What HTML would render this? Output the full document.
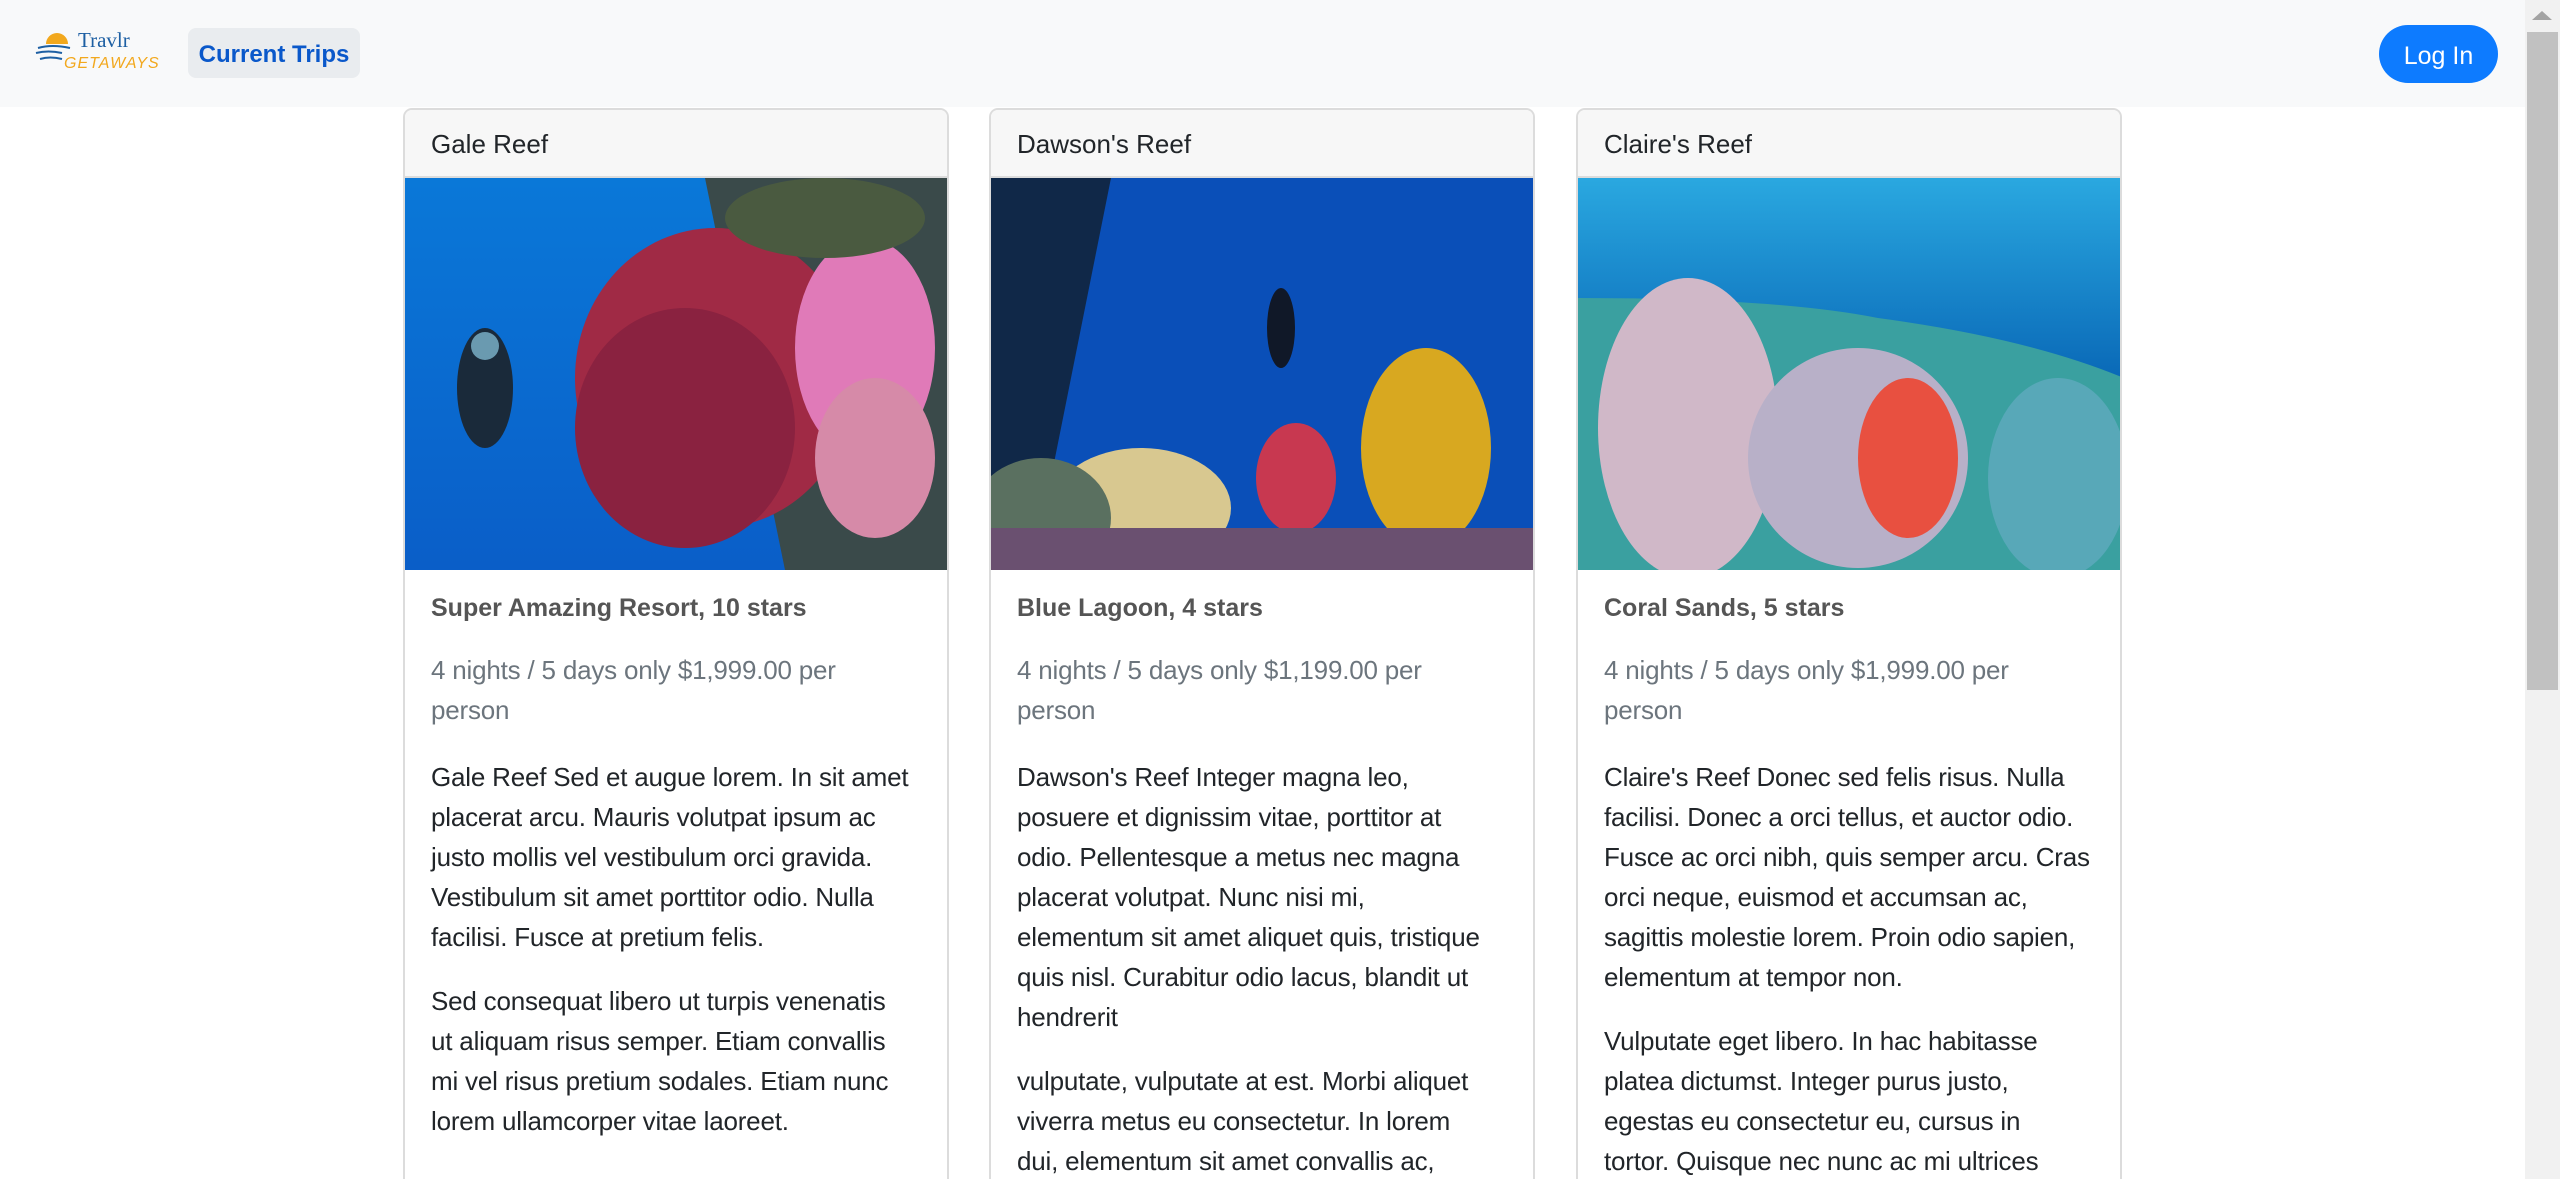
<!DOCTYPE html>
<html><head><meta charset="utf-8"><style>
*{box-sizing:border-box;margin:0;padding:0}
html,body{width:2560px;height:1179px;overflow:hidden;background:#fff;font-family:"Liberation Sans",sans-serif}
.nav{position:absolute;left:0;top:0;width:2526px;height:107px;background:#f8f9fa}
.ct{position:absolute;left:188px;top:28px;width:172px;height:50px;background:#e9ecef;border-radius:8px;color:#0a58ca;font-weight:bold;font-size:24px;line-height:54px;text-align:center}
.login{position:absolute;left:2379px;top:25px;width:119px;height:58px;background:#0d7bff;border-radius:29px;color:#fff;font-size:25px;line-height:62px;text-align:center}
.sb{position:absolute;left:2525px;top:0;width:35px;height:1179px;background:#f1f1f1}
.thumb{position:absolute;left:2527px;top:32px;width:31px;height:658px;background:#c1c1c1}
.card{position:absolute;top:108px;width:546px;height:1071px;border:2px solid #dcdcdc;border-bottom:none;border-radius:9px 9px 0 0;overflow:hidden}
.hd{height:68px;background:#f7f7f7;border-bottom:2px solid #dcdcdc;font-size:26px;color:#212529;padding-left:26px;line-height:68px}
.img{height:392px;display:block}
.bd{padding:22px 26px;white-space:nowrap}
.t{font-weight:bold;font-size:25px;color:#555;line-height:32px;margin-bottom:26px}
.s{font-size:26px;color:#6c757d;line-height:40px;margin-bottom:27px;letter-spacing:-.2px}
.p{font-size:26px;color:#212529;line-height:40px;margin-bottom:24px;letter-spacing:-.2px}
</style></head><body>
<div class="nav">
<svg style="position:absolute;left:34px;top:28px" width="125" height="46" viewBox="0 0 125 46">
<path d="M12 16 A11 11 0 0 1 34 16 Z" fill="#f2a81d"/>
<path d="M4 20 Q18 16 36 20" stroke="#1d5fa3" stroke-width="2" fill="none"/>
<path d="M2 25 Q14 22 28 25" stroke="#1d5fa3" stroke-width="2" fill="none"/>
<path d="M6 31 Q16 28 28 31" stroke="#1d5fa3" stroke-width="2" fill="none"/>
<text x="44" y="19" font-family="Liberation Serif,serif" font-size="21" fill="#1d5fa3">Travlr</text>
<text x="30" y="40" font-family="Liberation Sans,sans-serif" font-style="italic" font-size="16" fill="#f2a81d" letter-spacing="1">GETAWAYS</text>
</svg>
<div class="ct">Current Trips</div>
<div class="login">Log In</div>
</div>
<div class="sb"></div><div class="thumb"></div>
<svg style="position:absolute;left:2530px;top:8px" width="24" height="14"><path d="M2 12 L12 3 L22 12Z" fill="#a3a3a3"/></svg>

<div class="card" style="left:403px">
<div class="hd">Gale Reef</div>
<svg class="img" width="546" height="392" viewBox="0 0 546 392">
<defs><linearGradient id="g1" x1="0" y1="0" x2="0" y2="1"><stop offset="0" stop-color="#0a78d8"/><stop offset="1" stop-color="#0a5ec8"/></linearGradient></defs>
<rect width="546" height="392" fill="url(#g1)"/>
<path d="M300 0 L546 0 L546 392 L380 392 Z" fill="#3a4a4a"/>
<ellipse cx="310" cy="200" rx="140" ry="150" fill="#a02a45"/>
<ellipse cx="280" cy="250" rx="110" ry="120" fill="#8a2240"/>
<ellipse cx="460" cy="170" rx="70" ry="110" fill="#e07ab8"/>
<ellipse cx="470" cy="280" rx="60" ry="80" fill="#d68aa8"/>
<ellipse cx="420" cy="40" rx="100" ry="40" fill="#4a5a40"/>
<ellipse cx="80" cy="210" rx="28" ry="60" fill="#1a2a3a"/>
<circle cx="80" cy="168" r="14" fill="#6a9ab0"/>
</svg>
<div class="bd">
<div class="t">Super Amazing Resort, 10 stars</div>
<div class="s">4 nights / 5 days only $1,999.00 per<br>person</div>
<div class="p">Gale Reef Sed et augue lorem. In sit amet<br>placerat arcu. Mauris volutpat ipsum ac<br>justo mollis vel vestibulum orci gravida.<br>Vestibulum sit amet porttitor odio. Nulla<br>facilisi. Fusce at pretium felis.</div>
<div class="p">Sed consequat libero ut turpis venenatis<br>ut aliquam risus semper. Etiam convallis<br>mi vel risus pretium sodales. Etiam nunc<br>lorem ullamcorper vitae laoreet.</div>
</div></div>

<div class="card" style="left:989px">
<div class="hd">Dawson's Reef</div>
<svg class="img" width="546" height="392" viewBox="0 0 546 392">
<rect width="546" height="392" fill="#0a4fb8"/>
<path d="M0 0 L120 0 L100 100 L60 300 L0 300 Z" fill="#102848"/>
<ellipse cx="150" cy="330" rx="90" ry="60" fill="#d8c890"/>
<ellipse cx="50" cy="340" rx="70" ry="60" fill="#5a7060"/>
<ellipse cx="305" cy="300" rx="40" ry="55" fill="#c83850"/>
<ellipse cx="435" cy="270" rx="65" ry="100" fill="#d8a820"/>
<rect x="0" y="350" width="546" height="42" fill="#6a5070"/>
<ellipse cx="290" cy="150" rx="14" ry="40" fill="#101828"/>
</svg>
<div class="bd">
<div class="t">Blue Lagoon, 4 stars</div>
<div class="s">4 nights / 5 days only $1,199.00 per<br>person</div>
<div class="p">Dawson's Reef Integer magna leo,<br>posuere et dignissim vitae, porttitor at<br>odio. Pellentesque a metus nec magna<br>placerat volutpat. Nunc nisi mi,<br>elementum sit amet aliquet quis, tristique<br>quis nisl. Curabitur odio lacus, blandit ut<br>hendrerit</div>
<div class="p">vulputate, vulputate at est. Morbi aliquet<br>viverra metus eu consectetur. In lorem<br>dui, elementum sit amet convallis ac,</div>
</div></div>

<div class="card" style="left:1576px">
<div class="hd">Claire's Reef</div>
<svg class="img" width="546" height="392" viewBox="0 0 546 392">
<defs><linearGradient id="g3" x1="0" y1="0" x2="0" y2="1"><stop offset="0" stop-color="#2aa8e0"/><stop offset=".5" stop-color="#0a6ab8"/></linearGradient></defs>
<rect width="546" height="392" fill="url(#g3)"/>
<path d="M0 120 Q200 120 300 140 Q450 160 546 200 L546 392 L0 392 Z" fill="#3aa0a0"/>
<ellipse cx="110" cy="250" rx="90" ry="150" fill="#d0b8c8"/>
<ellipse cx="280" cy="280" rx="110" ry="110" fill="#b8b0c8"/>
<ellipse cx="330" cy="280" rx="50" ry="80" fill="#e85040"/>
<ellipse cx="480" cy="300" rx="70" ry="100" fill="#58a8b8"/>
</svg>
<div class="bd">
<div class="t">Coral Sands, 5 stars</div>
<div class="s">4 nights / 5 days only $1,999.00 per<br>person</div>
<div class="p">Claire's Reef Donec sed felis risus. Nulla<br>facilisi. Donec a orci tellus, et auctor odio.<br>Fusce ac orci nibh, quis semper arcu. Cras<br>orci neque, euismod et accumsan ac,<br>sagittis molestie lorem. Proin odio sapien,<br>elementum at tempor non.</div>
<div class="p">Vulputate eget libero. In hac habitasse<br>platea dictumst. Integer purus justo,<br>egestas eu consectetur eu, cursus in<br>tortor. Quisque nec nunc ac mi ultrices</div>
</div></div>
</body></html>
